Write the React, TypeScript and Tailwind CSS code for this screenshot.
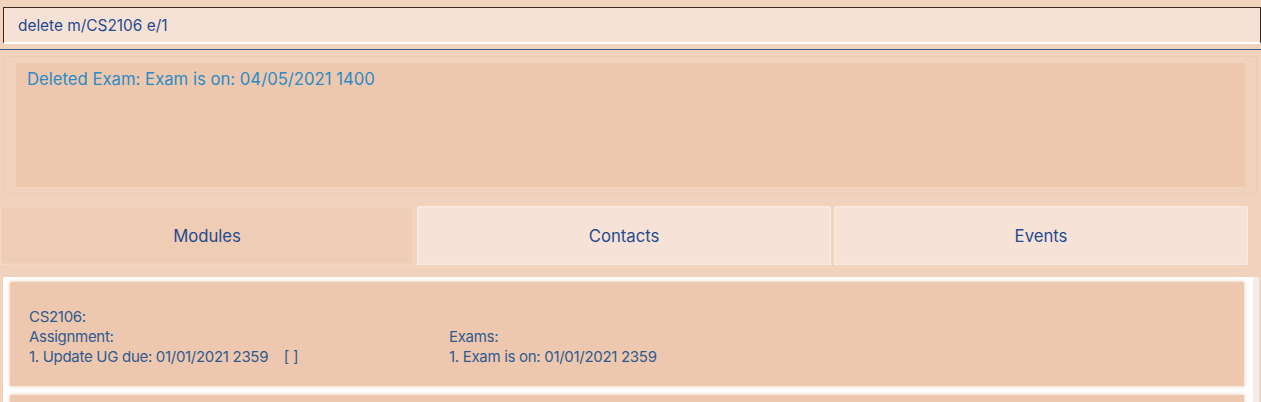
const modules = [
  {
    code: "CS2106",
    assignments: ["1. Update UG due: 01/01/2021 2359    [ ]"],
    exams: ["1. Exam is on: 01/01/2021 2359"],
  },
  { code: "", assignments: [], exams: [] },
];

const tabs = ["Modules", "Contacts", "Events"];

function ModuleCard({ m }: { m: (typeof modules)[number] }) {
  return (
    <div className="h-[104px] shrink-0 bg-[#edc8ae] px-[19px] pt-[25px] text-[15px] leading-[20px] text-[#2f5a91] shadow-[0_0_4px_rgba(230,190,160,0.9)] tracking-[-0.3px]">
      {m.code && <div>{m.code}:</div>}
      {m.code && (
        <div className="flex">
          <div className="w-[420px]">
            <div>Assignment:</div>
            {m.assignments.map((a) => (
              <div key={a} className="whitespace-pre">{a}</div>
            ))}
          </div>
          <div>
            <div>Exams:</div>
            {m.exams.map((e) => (
              <div key={e}>{e}</div>
            ))}
          </div>
        </div>
      )}
    </div>
  );
}

export default function App() {
  return (
    <div
      className="w-[1261px] h-[402px] overflow-hidden bg-[#f1d2bc]"
      style={{ fontFamily: "Inter, 'Liberation Sans', sans-serif" }}
    >
      {/* command box */}
      <div className="pt-[7px] pl-[3px] pr-0">
        <div className="h-[37px] flex items-center pl-[14px] pt-[2px] bg-[#f6e2d5] border-t border-l border-r border-[#3d2a20] border-b-2 border-b-white text-[15.4px] text-[#1f4a8f]">
          delete m/CS2106 e/1
        </div>
      </div>
      <div className="mt-[5px] border-t border-[#3b5a8a]" />

      {/* result display */}
      <div className="mt-[6px] ml-[4px] mr-[4px] h-[138px] border border-[#eecbb3] px-[11px] py-[6px]">
        <div className="h-full bg-[#edc8ae] px-[11px] pt-[4px] text-[16.7px] text-[#2b8bc6]">
          Deleted Exam: Exam is on: 04/05/2021 1400
        </div>
      </div>

      {/* tabs */}
      <div className="mt-[12px] flex gap-[3px] pr-[13px]">
        {tabs.map((t, i) => (
          <div
            key={t}
            className={
              "flex-1 h-[59px] flex items-center justify-center pt-[3px] rounded-t-[3px] text-[16.7px] text-[#1f4a8f] " +
              (i === 0
                ? "bg-[#efcdb5] shadow-[inset_0_0_3px_rgba(255,240,230,0.8)]"
                : "bg-[#f6e2d6] shadow-[inset_0_0_3px_rgba(255,255,255,0.8)]")
            }
          >
            {t}
          </div>
        ))}
      </div>

      {/* list */}
      <div className="mt-[12px] flex">
        <div className="ml-[3px] w-[1250px] bg-white pl-[7px] pr-[9px] pt-[5px] flex flex-col gap-[9px]">
          {modules.map((m, i) => (
            <ModuleCard key={i} m={m} />
          ))}
        </div>
        <div className="w-[7px] bg-[#f3ece8] border-r border-[#e8d5c8]" />
      </div>
    </div>
  );
}
